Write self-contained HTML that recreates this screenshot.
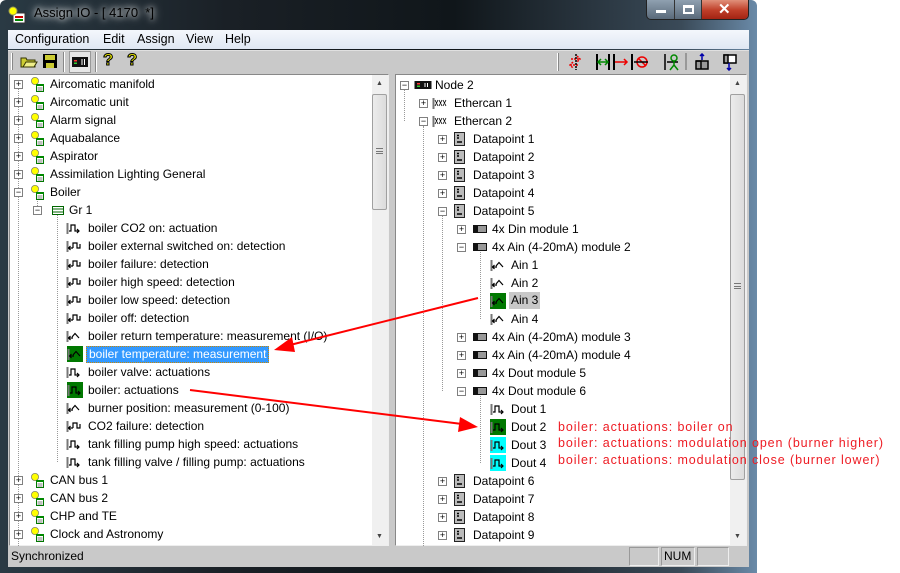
<!DOCTYPE html>
<html><head><meta charset="utf-8"><style>
*{margin:0;padding:0;box-sizing:border-box}
body{width:900px;height:573px;background:#fff;position:relative;overflow:hidden;font-family:"Liberation Sans",Arial,sans-serif;font-size:12px;color:#000}
.a{position:absolute}
.win{left:0;top:0;width:757px;height:573px;background:linear-gradient(90deg,#2a3a44,#1a2026 30%,#10161a 60%,#3a4a58 90%,#6a8aa8);border-radius:6px 6px 0 0}
.title{left:34px;top:5px;color:#000;font-size:13px;text-shadow:0 0 6px #fff,0 0 10px #fff}
.menu{left:8px;top:30px;width:741px;height:19px;background:linear-gradient(#f4f7fc,#dfe7f3)}
.menu span{position:absolute;top:2px;font-size:12.5px}
.tb{left:8px;top:50px;width:741px;height:24px;background:#c9c9c9;border-top:1px solid #e0e0e0}
.client{left:8px;top:74px;width:741px;height:493px;background:#c9c9c9}
.pane{background:#fff;border:1px solid #888;border-right-color:#eee;border-bottom-color:#eee}
.sb{background:#f0f0f0;width:16px}
.thumb{background:linear-gradient(90deg,#ececec,#dcdcdc);border:1px solid #a0a0a0;border-radius:2px;width:15px;left:0}
.r{position:absolute;height:18px;line-height:18px;white-space:nowrap}
.ex{position:absolute;width:9px;height:9px;border:1px solid #808080;background:#fff;font-size:9px;line-height:7px;text-align:center;color:#000}
.red{color:#ee1c24;font-size:12.5px;position:absolute;white-space:nowrap;letter-spacing:0.9px}
.st{position:absolute;top:547px;height:19px;border:1px solid #999;border-right-color:#eee;border-bottom-color:#eee}
</style></head><body>
<svg width="0" height="0" style="position:absolute">
<defs>
<g id="per"><circle cx="6" cy="5" r="3.6" fill="#ff0" stroke="#886" stroke-width=".8"/><rect x="7.5" y="8.5" width="7" height="7" fill="#fff" stroke="#070" stroke-width="1"/><rect x="7" y="8" width="8" height="2" fill="#080"/><path d="M8.5 12H13.5M8.5 14H13.5" stroke="#555" stroke-width=".8"/></g>
<g id="out"><path d="M1.5 3V14" stroke="#777" stroke-width="2"/><path d="M3 11H5V5H9V11H13M11 9L13 11L11 13" stroke="#000" fill="none" stroke-width="1.2"/></g>
<g id="in"><path d="M1.5 3V14" stroke="#777" stroke-width="2"/><path d="M2.5 10H7M4.5 8L2.5 10L4.5 12M7 10V5H11V10H14V6" stroke="#000" fill="none" stroke-width="1.2"/></g>
<g id="ana"><path d="M1.5 3V14" stroke="#777" stroke-width="2"/><path d="M2.5 10H7M4.5 8L2.5 10L4.5 12M6 9L9 5.5L13 10" stroke="#000" fill="none" stroke-width="1.2"/></g>
<g id="dp"><rect x="2.5" y="1.5" width="10" height="13" fill="#bbb" stroke="#222"/><path d="M5 4.5H7M5 7H7M5 11H10" stroke="#000" stroke-width="1.4"/></g>
<g id="mod"><rect x="1.5" y="4.5" width="13" height="7" fill="#999" stroke="#111"/><rect x="2" y="5" width="4" height="6" fill="#111"/></g>
<g id="grp"><rect x="2.5" y="4.5" width="11" height="8" fill="#fff" stroke="#060"/><path d="M3 7H13M3 10H13" stroke="#060"/></g>
<g id="eth"><path d="M1.5 3V14" stroke="#777" stroke-width="2"/><path d="M3 5L6 11M6 5L3 11M7 5L10 11M10 5L7 11M11 5L14 11M14 5L11 11" stroke="#000" stroke-width=".8"/></g>
<g id="node"><rect x="0.5" y="4" width="17" height="8" fill="#111"/><rect x="3" y="6" width="3" height="1.5" fill="#f33"/><rect x="3" y="8.5" width="3" height="1.5" fill="#3c3"/><path d="M11 6V10M13.5 6V10" stroke="#fff"/></g>
</defs></svg>

<div class="a win"></div>
<svg class="a" style="left:8px;top:6px" width="18" height="18"><rect x="5" y="7" width="12" height="10" fill="#fff" stroke="#333"/><rect x="7" y="10" width="8" height="2" fill="#c00"/><rect x="7" y="13" width="8" height="2" fill="#080"/><circle cx="5" cy="5" r="4" fill="#ff0" stroke="#995"/></svg>
<div class="a title">Assign IO - [ 4170&nbsp; *]</div>
<div class="a" style="left:646px;top:0;width:103px;height:20px;border:1px solid #222;border-top:none;border-radius:0 0 5px 5px;overflow:hidden;background:linear-gradient(#8fa0b0,#5a6a7a)">
 <div class="a" style="left:0;top:0;width:28px;height:20px;border-right:1px solid #333"></div>
 <div class="a" style="left:9px;top:10px;width:10px;height:3px;background:#fff"></div>
 <div class="a" style="left:28px;top:0;width:27px;height:20px;border-right:1px solid #333"></div>
 <div class="a" style="left:36px;top:5px;width:11px;height:9px;border:2px solid #fff;border-top-width:3px"></div>
 <div class="a" style="left:55px;top:0;width:47px;height:20px;background:linear-gradient(#e0907a,#c0402a 50%,#a02010)"></div>
 <div class="a" style="left:71px;top:0px;color:#fff;font-weight:bold;font-size:15px">✕</div>
</div>

<div class="a menu">
<span style="left:7px">Configuration</span><span style="left:95px">Edit</span><span style="left:129px">Assign</span><span style="left:178px">View</span><span style="left:217px">Help</span>
</div>
<div class="a tb"></div>
<div class="a" style="left:11px;top:53px;width:2px;height:17px;border-left:1px solid #fff;border-right:1px solid #888"></div>
<svg class="a" style="left:20px;top:53px" width="18" height="16"><path d="M1 5H6L7 7H15V14H1Z" fill="#cc3" stroke="#330"/><path d="M3 14L6 9H17L14 14Z" fill="#ee8" stroke="#330"/></svg>
<svg class="a" style="left:42px;top:53px" width="16" height="16"><rect x="1" y="1" width="14" height="14" fill="#000"/><rect x="3" y="2" width="10" height="5" fill="#cc3"/><rect x="4" y="10" width="8" height="5" fill="#cc3"/></svg>
<div class="a" style="left:63px;top:52px;width:2px;height:20px;border-left:1px solid #888;border-right:1px solid #fff"></div>
<div class="a" style="left:69px;top:51px;width:22px;height:22px;background:#e6e6e6;border:1px solid #999"></div>
<svg class="a" style="left:71px;top:54px" width="18" height="16"><rect x="1" y="3" width="16" height="10" fill="#111"/><rect x="3" y="6" width="3" height="1.5" fill="#f33"/><rect x="3" y="8.5" width="3" height="1.5" fill="#3c3"/><path d="M11 5V11M13.5 5V11" stroke="#fff"/></svg>
<div class="a" style="left:95px;top:52px;width:2px;height:20px;border-left:1px solid #888;border-right:1px solid #fff"></div>
<div class="a" style="left:103px;top:50px;font-size:17px;font-weight:bold;color:#ee0;-webkit-text-stroke:1px #000">?</div>
<div class="a" style="left:127px;top:50px;font-size:17px;font-weight:bold;color:#ee0;-webkit-text-stroke:1px #000">?</div>
<div class="a" style="left:557px;top:53px;width:2px;height:18px;border-left:1px solid #fff;border-right:1px solid #888"></div>
<svg class="a" style="left:566px;top:53px" width="180" height="18" stroke-width="1.5" fill="none">
<path d="M5 6H14M11 3L14 6L11 9M4 12H13M7 9L4 12L7 15" stroke="#e00" stroke-dasharray="2 1"/><path d="M10 1V17" stroke="#000" stroke-dasharray="2 1"/>
<path d="M31 1V17M43 1V17" stroke="#000" stroke-width="2"/><path d="M32 9H42M35 6L32 9L35 12M39 6L42 9L39 12" stroke="#080"/>
<path d="M48 1V17" stroke="#000" stroke-width="2"/><path d="M49 9H61M58 6L61 9L58 12" stroke="#e00"/>
<path d="M66 1V17" stroke="#000" stroke-width="2"/><circle cx="76" cy="9" r="5" stroke="#e00"/><path d="M72 5L80 13" stroke="#e00"/><path d="M68 9H82" stroke="#000"/>
<path d="M99 1V17M101 9H112" stroke="#000" stroke-width="1.5"/><circle cx="108" cy="5" r="3" stroke="#080"/><path d="M108 8V12L104 17M108 12L112 17" stroke="#080"/>
<path d="M120 -1V17" stroke="#888"/>
<rect x="130" y="8" width="12" height="8" fill="#999" stroke="#000"/><path d="M130 8H135V16" stroke="#000"/><path d="M136 7V1M134 3L136 1L138 3" stroke="#00a"/>
<rect x="158" y="2" width="12" height="8" fill="#fff" stroke="#000"/><rect x="158" y="2" width="4" height="8" fill="#999" stroke="#000"/><path d="M163 10V17M161 15L163 17L165 15" stroke="#00a"/>
</svg>

<div class="a client"></div>
<div class="a pane" style="left:9px;top:74px;width:380px;height:472px"></div>
<div class="a sb" style="left:372px;top:75px;height:470px"></div>
<div class="a thumb" style="left:372px;top:94px;height:116px"></div>
<div class="a" style="left:376px;top:80px;font-size:7px;color:#444">▲</div>
<div class="a" style="left:376px;top:533px;font-size:7px;color:#444">▼</div>
<div class="a" style="left:376px;top:148px;width:7px;height:6px;border-top:1px solid #777;border-bottom:1px solid #777"><div style="margin-top:2px;border-top:1px solid #777"></div></div>
<div class="a pane" style="left:395px;top:74px;width:352px;height:472px"></div>
<div class="a sb" style="left:730px;top:75px;height:470px"></div>
<div class="a thumb" style="left:730px;top:94px;height:386px"></div>
<div class="a" style="left:734px;top:80px;font-size:7px;color:#444">▲</div>
<div class="a" style="left:734px;top:533px;font-size:7px;color:#444">▼</div>
<div class="a" style="left:734px;top:283px;width:7px;height:6px;border-top:1px solid #777;border-bottom:1px solid #777"><div style="margin-top:2px;border-top:1px solid #777"></div></div>

<div class="a" style="left:18px;top:84px;height:462px;border-left:1px dotted #999"></div>
<div class="a" style="left:37px;top:196px;height:14px;border-left:1px dotted #999"></div>
<div class="a" style="left:57px;top:214px;height:248px;border-left:1px dotted #999"></div>
<div class="a" style="left:404px;top:90px;height:31px;border-left:1px dotted #999"></div>
<div class="a" style="left:423px;top:126px;height:420px;border-left:1px dotted #999"></div>
<div class="a" style="left:442px;top:216px;height:175px;border-left:1px dotted #999"></div>
<div class="a" style="left:480px;top:252px;height:67px;border-left:1px dotted #999"></div>
<div class="a" style="left:480px;top:396px;height:67px;border-left:1px dotted #999"></div>

<div class="ex" style="left:14px;top:80px">+</div><svg class="a" style="left:29px;top:76px" width="16" height="16"><use href="#per"/></svg><div class="r" style="left:50px;top:75px">Aircomatic manifold</div>
<div class="ex" style="left:14px;top:98px">+</div><svg class="a" style="left:29px;top:94px" width="16" height="16"><use href="#per"/></svg><div class="r" style="left:50px;top:93px">Aircomatic unit</div>
<div class="ex" style="left:14px;top:116px">+</div><svg class="a" style="left:29px;top:112px" width="16" height="16"><use href="#per"/></svg><div class="r" style="left:50px;top:111px">Alarm signal</div>
<div class="ex" style="left:14px;top:134px">+</div><svg class="a" style="left:29px;top:130px" width="16" height="16"><use href="#per"/></svg><div class="r" style="left:50px;top:129px">Aquabalance</div>
<div class="ex" style="left:14px;top:152px">+</div><svg class="a" style="left:29px;top:148px" width="16" height="16"><use href="#per"/></svg><div class="r" style="left:50px;top:147px">Aspirator</div>
<div class="ex" style="left:14px;top:170px">+</div><svg class="a" style="left:29px;top:166px" width="16" height="16"><use href="#per"/></svg><div class="r" style="left:50px;top:165px">Assimilation Lighting General</div>
<div class="ex" style="left:14px;top:188px">−</div><svg class="a" style="left:29px;top:184px" width="16" height="16"><use href="#per"/></svg><div class="r" style="left:50px;top:183px">Boiler</div>
<div class="ex" style="left:33px;top:206px">−</div><svg class="a" style="left:50px;top:202px" width="16" height="16"><use href="#grp"/></svg><div class="r" style="left:69px;top:201px">Gr 1</div>

<svg class="a" style="left:66px;top:220px" width="16" height="16"><use href="#out"/></svg><div class="r" style="left:88px;top:219px">boiler CO2 on: actuation</div>
<svg class="a" style="left:66px;top:238px" width="16" height="16"><use href="#in"/></svg><div class="r" style="left:88px;top:237px">boiler external switched on: detection</div>
<svg class="a" style="left:66px;top:256px" width="16" height="16"><use href="#in"/></svg><div class="r" style="left:88px;top:255px">boiler failure: detection</div>
<svg class="a" style="left:66px;top:274px" width="16" height="16"><use href="#in"/></svg><div class="r" style="left:88px;top:273px">boiler high speed: detection</div>
<svg class="a" style="left:66px;top:292px" width="16" height="16"><use href="#in"/></svg><div class="r" style="left:88px;top:291px">boiler low speed: detection</div>
<svg class="a" style="left:66px;top:310px" width="16" height="16"><use href="#in"/></svg><div class="r" style="left:88px;top:309px">boiler off: detection</div>
<svg class="a" style="left:66px;top:328px" width="16" height="16"><use href="#ana"/></svg><div class="r" style="left:88px;top:327px">boiler return temperature: measurement (I/O)</div>
<div class="a" style="left:67px;top:346px;width:16px;height:16px;background:#007800"></div><svg class="a" style="left:67px;top:346px" width="16" height="16"><use href="#ana"/></svg><div class="r" style="left:86px;top:346px;height:17px;line-height:15px;padding:0 2px;background:#3399ff;color:#fff;border:1px dotted #c80">boiler temperature: measurement</div>
<svg class="a" style="left:66px;top:364px" width="16" height="16"><use href="#out"/></svg><div class="r" style="left:88px;top:363px">boiler valve: actuations</div>
<div class="a" style="left:67px;top:382px;width:16px;height:16px;background:#007800"></div><svg class="a" style="left:67px;top:382px" width="16" height="16"><use href="#out"/></svg><div class="r" style="left:88px;top:381px">boiler: actuations</div>
<svg class="a" style="left:66px;top:400px" width="16" height="16"><use href="#ana"/></svg><div class="r" style="left:88px;top:399px">burner position: measurement (0-100)</div>
<svg class="a" style="left:66px;top:418px" width="16" height="16"><use href="#in"/></svg><div class="r" style="left:88px;top:417px">CO2 failure: detection</div>
<svg class="a" style="left:66px;top:436px" width="16" height="16"><use href="#out"/></svg><div class="r" style="left:88px;top:435px">tank filling pump high speed: actuations</div>
<svg class="a" style="left:66px;top:454px" width="16" height="16"><use href="#out"/></svg><div class="r" style="left:88px;top:453px">tank filling valve / filling pump: actuations</div>

<div class="ex" style="left:14px;top:476px">+</div><svg class="a" style="left:29px;top:472px" width="16" height="16"><use href="#per"/></svg><div class="r" style="left:50px;top:471px">CAN bus 1</div>
<div class="ex" style="left:14px;top:494px">+</div><svg class="a" style="left:29px;top:490px" width="16" height="16"><use href="#per"/></svg><div class="r" style="left:50px;top:489px">CAN bus 2</div>
<div class="ex" style="left:14px;top:512px">+</div><svg class="a" style="left:29px;top:508px" width="16" height="16"><use href="#per"/></svg><div class="r" style="left:50px;top:507px">CHP and TE</div>
<div class="ex" style="left:14px;top:530px">+</div><svg class="a" style="left:29px;top:526px" width="16" height="16"><use href="#per"/></svg><div class="r" style="left:50px;top:525px">Clock and Astronomy</div>

<div class="ex" style="left:400px;top:81px">−</div><svg class="a" style="left:414px;top:77px" width="18" height="16"><use href="#node"/></svg><div class="r" style="left:435px;top:76px">Node 2</div>
<div class="ex" style="left:419px;top:99px">+</div><svg class="a" style="left:432px;top:95px" width="18" height="16"><use href="#eth"/></svg><div class="r" style="left:454px;top:94px">Ethercan 1</div>
<div class="ex" style="left:419px;top:117px">−</div><svg class="a" style="left:432px;top:113px" width="18" height="16"><use href="#eth"/></svg><div class="r" style="left:454px;top:112px">Ethercan 2</div>
<div class="ex" style="left:438px;top:135px">+</div><svg class="a" style="left:452px;top:131px" width="16" height="16"><use href="#dp"/></svg><div class="r" style="left:473px;top:130px">Datapoint 1</div>
<div class="ex" style="left:438px;top:153px">+</div><svg class="a" style="left:452px;top:149px" width="16" height="16"><use href="#dp"/></svg><div class="r" style="left:473px;top:148px">Datapoint 2</div>
<div class="ex" style="left:438px;top:171px">+</div><svg class="a" style="left:452px;top:167px" width="16" height="16"><use href="#dp"/></svg><div class="r" style="left:473px;top:166px">Datapoint 3</div>
<div class="ex" style="left:438px;top:189px">+</div><svg class="a" style="left:452px;top:185px" width="16" height="16"><use href="#dp"/></svg><div class="r" style="left:473px;top:184px">Datapoint 4</div>
<div class="ex" style="left:438px;top:207px">−</div><svg class="a" style="left:452px;top:203px" width="16" height="16"><use href="#dp"/></svg><div class="r" style="left:473px;top:202px">Datapoint 5</div>
<div class="ex" style="left:457px;top:225px">+</div><svg class="a" style="left:472px;top:221px" width="16" height="16"><use href="#mod"/></svg><div class="r" style="left:492px;top:220px">4x Din module 1</div>
<div class="ex" style="left:457px;top:243px">−</div><svg class="a" style="left:472px;top:239px" width="16" height="16"><use href="#mod"/></svg><div class="r" style="left:492px;top:238px">4x Ain (4-20mA) module 2</div>
<svg class="a" style="left:490px;top:257px" width="16" height="16"><use href="#ana"/></svg><div class="r" style="left:511px;top:256px">Ain 1</div>
<svg class="a" style="left:490px;top:275px" width="16" height="16"><use href="#ana"/></svg><div class="r" style="left:511px;top:274px">Ain 2</div>
<div class="a" style="left:490px;top:293px;width:16px;height:16px;background:#007800"></div><svg class="a" style="left:490px;top:293px" width="16" height="16"><use href="#ana"/></svg><div class="r" style="left:509px;top:292px;height:17px;line-height:17px;padding:0 2px;background:#c8c8c8">Ain 3</div>
<svg class="a" style="left:490px;top:311px" width="16" height="16"><use href="#ana"/></svg><div class="r" style="left:511px;top:310px">Ain 4</div>
<div class="ex" style="left:457px;top:333px">+</div><svg class="a" style="left:472px;top:329px" width="16" height="16"><use href="#mod"/></svg><div class="r" style="left:492px;top:328px">4x Ain (4-20mA) module 3</div>
<div class="ex" style="left:457px;top:351px">+</div><svg class="a" style="left:472px;top:347px" width="16" height="16"><use href="#mod"/></svg><div class="r" style="left:492px;top:346px">4x Ain (4-20mA) module 4</div>
<div class="ex" style="left:457px;top:369px">+</div><svg class="a" style="left:472px;top:365px" width="16" height="16"><use href="#mod"/></svg><div class="r" style="left:492px;top:364px">4x Dout module 5</div>
<div class="ex" style="left:457px;top:387px">−</div><svg class="a" style="left:472px;top:383px" width="16" height="16"><use href="#mod"/></svg><div class="r" style="left:492px;top:382px">4x Dout module 6</div>
<svg class="a" style="left:490px;top:401px" width="16" height="16"><use href="#out"/></svg><div class="r" style="left:511px;top:400px">Dout 1</div>
<div class="a" style="left:490px;top:419px;width:16px;height:16px;background:#007800"></div><svg class="a" style="left:490px;top:419px" width="16" height="16"><use href="#out"/></svg><div class="r" style="left:511px;top:418px">Dout 2</div>
<div class="a" style="left:490px;top:437px;width:16px;height:16px;background:#00ffff"></div><svg class="a" style="left:490px;top:437px" width="16" height="16"><use href="#out"/></svg><div class="r" style="left:511px;top:436px">Dout 3</div>
<div class="a" style="left:490px;top:455px;width:16px;height:16px;background:#00ffff"></div><svg class="a" style="left:490px;top:455px" width="16" height="16"><use href="#out"/></svg><div class="r" style="left:511px;top:454px">Dout 4</div>
<div class="ex" style="left:438px;top:477px">+</div><svg class="a" style="left:452px;top:473px" width="16" height="16"><use href="#dp"/></svg><div class="r" style="left:473px;top:472px">Datapoint 6</div>
<div class="ex" style="left:438px;top:495px">+</div><svg class="a" style="left:452px;top:491px" width="16" height="16"><use href="#dp"/></svg><div class="r" style="left:473px;top:490px">Datapoint 7</div>
<div class="ex" style="left:438px;top:513px">+</div><svg class="a" style="left:452px;top:509px" width="16" height="16"><use href="#dp"/></svg><div class="r" style="left:473px;top:508px">Datapoint 8</div>
<div class="ex" style="left:438px;top:531px">+</div><svg class="a" style="left:452px;top:527px" width="16" height="16"><use href="#dp"/></svg><div class="r" style="left:473px;top:526px">Datapoint 9</div>

<div class="red" style="left:558px;top:420px">boiler: actuations: boiler on</div>
<div class="red" style="left:558px;top:436px">boiler: actuations: modulation open (burner higher)</div>
<div class="red" style="left:558px;top:453px">boiler: actuations: modulation close (burner lower)</div>

<svg class="a" style="left:0;top:0" width="900" height="573">
<path d="M478 298L290 345" stroke="#f00" stroke-width="2"/><path d="M274 350L292 337L295 352Z" fill="#f00"/>
<path d="M190 390L462 424" stroke="#f00" stroke-width="2"/><path d="M478 427L460 417L458 432Z" fill="#f00"/>
</svg>

<div class="a" style="left:11px;top:549px">Synchronized</div>
<div class="st" style="left:629px;width:30px"></div>
<div class="st" style="left:661px;width:34px;padding-left:2px;line-height:17px">NUM</div>
<div class="st" style="left:697px;width:32px"></div>
</body></html>
